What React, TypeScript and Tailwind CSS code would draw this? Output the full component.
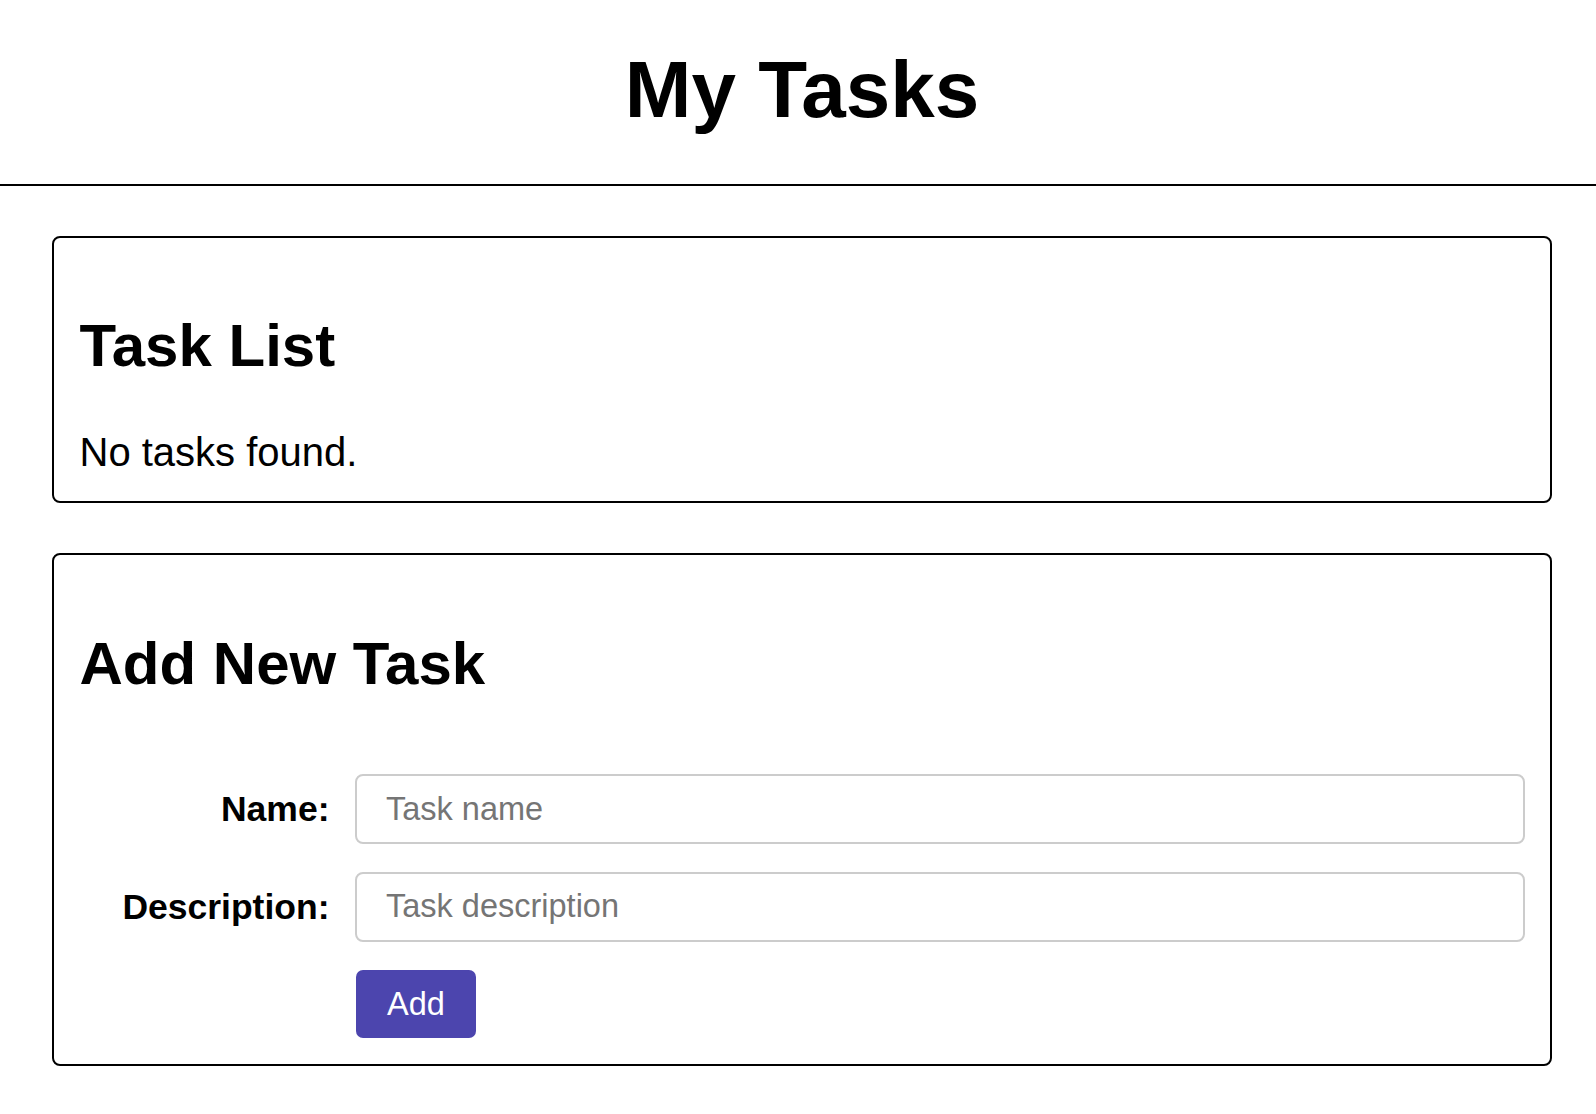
import React from "react";

export default function App() {
  return (
    <div className="min-h-screen bg-white text-black font-['Liberation_Sans',Arial,sans-serif]">
      <header className="border-b-2 border-black pt-[43.6px] pb-[48.4px]">
        <h1 className="pl-[8px] text-center text-[80px] leading-[92px] font-bold">My Tasks</h1>
      </header>
      <main className="pl-[52px] pt-[50px] pb-[48px]">
        <section className="w-[1500px] rounded-[8px] border-2 border-black px-[25.5px] py-[25.5px]">
          <h2 className="mt-[47.8px] text-[60px] leading-[69px] font-bold">Task List</h2>
          <p className="mt-[49px] text-[40px] leading-[46px]">No tasks found.</p>
        </section>
        <section className="mt-[50.6px] w-[1500px] rounded-[8px] border-2 border-black px-[25.5px] pt-[25.5px] pb-[26.5px]">
          <h2 className="mt-[48.2px] text-[60px] leading-[69px] font-bold">Add New Task</h2>
          <form
            className="mt-[76.3px] flex flex-col gap-[27.6px]"
            onSubmit={(e) => e.preventDefault()}
          >
            <div className="flex items-center">
              <label className="mr-[25px] w-[250px] shrink-0 text-right text-[35.5px] font-bold leading-[40px]">
                Name:
              </label>
              <input
                type="text"
                placeholder="Task name"
                className="h-[70px] flex-1 rounded-[8px] border-2 border-[#cccccc] pl-[29.5px] text-[32.5px] outline-none placeholder:text-[#757575]"
              />
            </div>
            <div className="flex items-center">
              <label className="mr-[25px] w-[250px] shrink-0 text-right text-[35.5px] font-bold leading-[40px]">
                Description:
              </label>
              <input
                type="text"
                placeholder="Task description"
                className="h-[70px] flex-1 rounded-[8px] border-2 border-[#cccccc] pl-[29.5px] text-[32.5px] outline-none placeholder:text-[#757575]"
              />
            </div>
            <div className="flex">
              <button
                type="submit"
                className="ml-[276.5px] mt-[0.6px] h-[67.7px] rounded-[7px] bg-[#4c45ae] px-[31px] text-[32.5px] leading-none text-white"
              >
                Add
              </button>
            </div>
          </form>
        </section>
      </main>
    </div>
  );
}
